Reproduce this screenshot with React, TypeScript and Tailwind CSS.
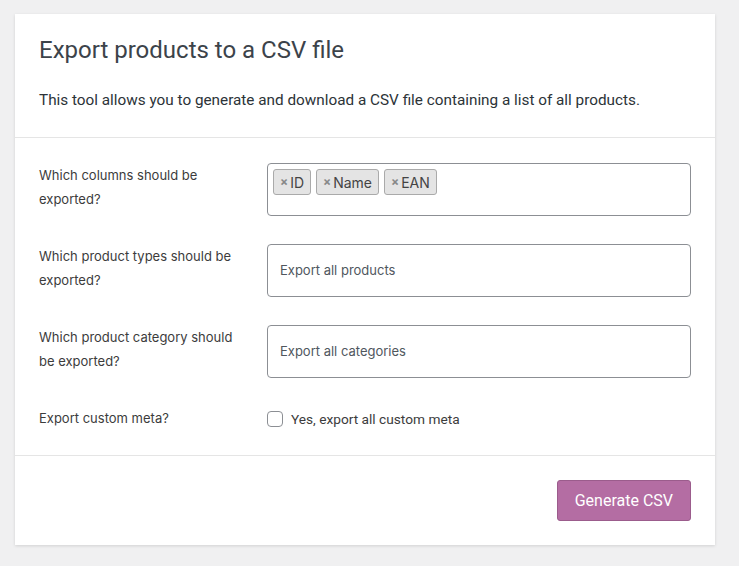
import React from "react";

function Tag({ label }: { label: string }) {
  return (
    <span className="inline-flex items-center h-[26px] px-[6px] rounded-[3px] border border-[#aaaaaa] bg-[#e4e4e4] text-[14px] text-[#444]">
      <span className="text-[#888] text-[12px] font-bold mr-[2px]">×</span>
      {label}
    </span>
  );
}

function Row({ label, children }: { label: React.ReactNode; children: React.ReactNode }) {
  return (
    <div className="flex items-start">
      <div className="w-[228px] shrink-0 pr-4 text-[13px] leading-[24px] text-[#3c3c3c]">{label}</div>
      <div className="flex-1">{children}</div>
    </div>
  );
}

export default function App() {
  return (
    <div className="min-h-[566px] w-[739px] bg-[#f0f0f1] pt-[14px] pl-[15px]" style={{ fontFamily: "Inter, Roboto, 'Noto Sans', sans-serif" }}>
      <div className="w-[700px] bg-white shadow-[0_1px_3px_rgba(0,0,0,0.13)]">
        <div className="px-[24px] pt-[21px] pb-[26px] border-b border-[#e5e5e5]" style={{ fontFamily: "Roboto, sans-serif" }}>
          <h1 className="text-[24px] leading-[30px] text-[#3c434a] font-normal">Export products to a CSV file</h1>
          <p className="mt-[24px] text-[15.3px] leading-[22px] text-[#2c3338]">
            This tool allows you to generate and download a CSV file containing a list of all products.
          </p>
        </div>
        <div className="px-[24px] pt-[25px] pb-[24px] border-b border-[#e5e5e5] flex flex-col gap-[28px]">
          <Row label={<>Which columns should be<br />exported?</>}>
            <div className="h-[53px] rounded-[4px] border border-[#8c8f94] px-[5px] pt-[5px] flex items-start gap-[5px]">
              <Tag label="ID" />
              <Tag label="Name" />
              <Tag label="EAN" />
            </div>
          </Row>
          <Row label={<>Which product types should be<br />exported?</>}>
            <div className="h-[53px] rounded-[4px] border border-[#8c8f94] px-[12px] flex items-center text-[13px] text-[#50575e]">
              Export all products
            </div>
          </Row>
          <Row label={<>Which product category should<br />be exported?</>}>
            <div className="h-[53px] rounded-[4px] border border-[#8c8f94] px-[12px] flex items-center text-[13px] text-[#50575e]">
              Export all categories
            </div>
          </Row>
          <Row label="Export custom meta?">
            <label className="flex items-center gap-[8px] text-[13.7px] leading-[24px] text-[#3c3c3c] mt-[1px]" style={{ fontFamily: "Roboto, sans-serif" }}>
              <span className="w-[16px] h-[16px] rounded-[4px] border border-[#8c8f94] bg-white inline-block" />
              Yes, export all custom meta
            </label>
          </Row>
        </div>
        <div className="px-[24px] pt-[24px] pb-[24px] flex justify-end">
          <button className="h-[41px] px-[17px] rounded-[3px] bg-[#b46da3] border border-[#9b5c8c] text-white text-[16px]" style={{ fontFamily: "Roboto, sans-serif" }}>
            Generate CSV
          </button>
        </div>
      </div>
    </div>
  );
}
